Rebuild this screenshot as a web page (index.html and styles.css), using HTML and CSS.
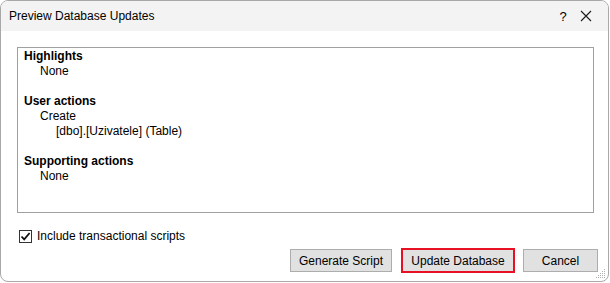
FILE: index.html
```html
<!DOCTYPE html>
<html>
<head>
<meta charset="utf-8">
<link rel="stylesheet" href="styles.css">
</head>
<body>
<div class="window">
  <div class="titlebar">
    <span class="title">Preview Database Updates</span>
    <span class="help">?</span>
    <span class="close">
      <svg width="12" height="12" viewBox="0 0 12 12"><path d="M1 1L11 11M11 1L1 11" stroke="#1a1a1a" stroke-width="1.1" fill="none"/></svg>
    </span>
  </div>
  <div class="content">
    <div class="report">
      <div class="h">Highlights</div>
      <div class="l1">None</div>
      <div class="blank"></div>
      <div class="h">User actions</div>
      <div class="l1">Create</div>
      <div class="l2">[dbo].[Uzivatele] (Table)</div>
      <div class="blank"></div>
      <div class="h">Supporting actions</div>
      <div class="l1">None</div>
    </div>
    <label class="check">
      <span class="box"><svg width="11" height="11" viewBox="0 0 11 11"><path d="M1.5 5.5L4.2 8.3L9.6 2" stroke="#111" stroke-width="1.8" fill="none"/></svg></span>
      <span>Include transactional scripts</span>
    </label>
    <div class="buttons">
      <div class="btn gen">Generate Script</div>
      <div class="btn upd">Update Database</div>
      <div class="btn cancel">Cancel</div>
    </div>
  </div>
  <svg class="grip" width="10" height="10" viewBox="0 0 10 10">
    <g fill="#b0b0b0">
      <rect x="8" y="0" width="1" height="1"/>
      <rect x="6" y="2" width="1" height="1"/><rect x="8" y="2" width="1" height="1"/>
      <rect x="4" y="4" width="1" height="1"/><rect x="6" y="4" width="1" height="1"/><rect x="8" y="4" width="1" height="1"/>
      <rect x="2" y="6" width="1" height="1"/><rect x="4" y="6" width="1" height="1"/><rect x="6" y="6" width="1" height="1"/><rect x="8" y="6" width="1" height="1"/>
      <rect x="0" y="8" width="1" height="1"/><rect x="2" y="8" width="1" height="1"/><rect x="4" y="8" width="1" height="1"/><rect x="6" y="8" width="1" height="1"/><rect x="8" y="8" width="1" height="1"/>
    </g>
  </svg>
</div>
</body>
</html>
```

FILE: styles.css
```css
html, body {
  margin: 0;
  padding: 0;
  background: #ffffff;
}
body {
  font-family: "Liberation Sans", Arial, sans-serif;
  font-size: 12px;
  color: #000;
}
.window {
  position: relative;
  box-sizing: border-box;
  width: 609px;
  height: 282px;
  border: 1px solid #a8a8a8;
  border-radius: 8px;
  overflow: hidden;
  background: #fff;
}
.titlebar {
  height: 30px;
  background: #f3f3f3;
  display: flex;
  align-items: center;
  padding-left: 8px;
}
.title {
  flex: 1;
  padding-bottom: 1px;
}
.help {
  width: 22px;
  text-align: center;
  margin-right: 6px;
  font-size: 13px;
}
.close {
  width: 14px;
  display: flex;
  margin-right: 14px;
}
.content {
  padding: 16px 10px 0 16px;
}
.report {
  box-sizing: border-box;
  width: 577px;
  height: 166px;
  border: 1px solid #a0a0a0;
  padding: 1px 0 0 6px;
  line-height: 15px;
}
.h { font-weight: bold; }
.l1 { padding-left: 16px; }
.l2 { padding-left: 32px; }
.blank { height: 15px; }
.check {
  display: flex;
  align-items: center;
  margin-top: 16px;
  margin-left: 2px;
  height: 14px;
}
.box {
  box-sizing: border-box;
  width: 13px;
  height: 13px;
  border: 1px solid #333;
  display: flex;
  align-items: center;
  justify-content: center;
  margin-right: 5px;
  background: #fff;
}
.buttons {
  display: flex;
  justify-content: flex-end;
  align-items: center;
  margin-top: 5px;
  padding-right: 0;
}
.btn {
  box-sizing: border-box;
  height: 23px;
  border: 1px solid #adadad;
  background: #e1e1e1;
  display: flex;
  align-items: center;
  justify-content: center;
}
.gen { width: 102px; }
.upd {
  width: 114px;
  height: 25px;
  border: 2px solid #e81123;
  margin-left: 9px;
}
.cancel {
  width: 75px;
  margin-left: 8px;
}
.grip {
  position: absolute;
  right: 2px;
  bottom: 2px;
}
```
